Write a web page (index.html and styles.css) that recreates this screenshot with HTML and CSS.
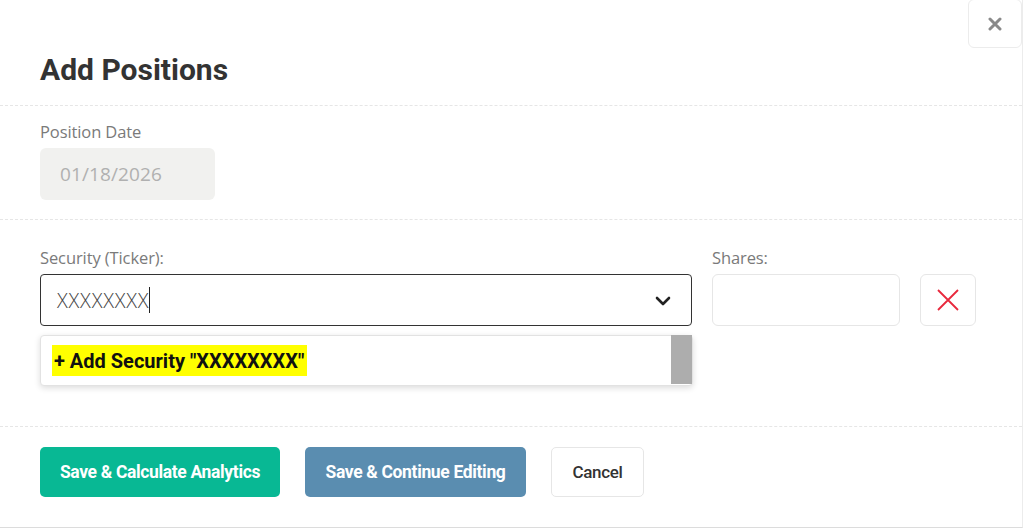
FILE: index.html
```html
<!DOCTYPE html>
<html>
<head>
<meta charset="utf-8">
<link rel="stylesheet" href="styles.css">
</head>
<body>
<div class="modal">
  <button class="close" aria-label="Close">
    <svg width="14" height="14" viewBox="0 0 14 14"><path d="M2 2L12 12M12 2L2 12" stroke="#8a8a8a" stroke-width="3" stroke-linecap="round"/></svg>
  </button>
  <div class="header">
    <h1 class="title">Add Positions</h1>
  </div>
  <div class="section date-section">
    <label class="label">Position Date</label>
    <div class="date-input">01/18/2026</div>
  </div>
  <div class="section row-section">
    <div class="row">
      <div class="field security">
        <label class="label">Security (Ticker):</label>
        <div class="select">
          <span class="value">XXXXXXXX</span><span class="caret"></span>
          <svg class="chevron" width="16" height="10" viewBox="0 0 16 10"><path d="M2 2L8 8L14 2" fill="none" stroke="#222" stroke-width="2.6" stroke-linecap="round" stroke-linejoin="round"/></svg>
        </div>
        <div class="dropdown">
          <div class="option"><span class="hl">+ Add Security "XXXXXXXX"</span></div>
          <div class="scrollbar"></div>
        </div>
      </div>
      <div class="field shares">
        <label class="label">Shares:</label>
        <div class="shares-input"></div>
      </div>
      <button class="remove" aria-label="Remove">
        <svg width="24" height="24" viewBox="0 0 24 24"><path d="M2 2L22 22M22 2L2 22" stroke="#e8283c" stroke-width="1.8"/></svg>
      </button>
    </div>
  </div>
  <div class="footer">
    <button class="btn btn-green">Save &amp; Calculate Analytics</button>
    <button class="btn btn-blue">Save &amp; Continue Editing</button>
    <button class="btn btn-cancel">Cancel</button>
  </div>
</div>
</body>
</html>
```
FILE: styles.css
```css
* { box-sizing: border-box; }
html, body { margin: 0; padding: 0; background: #fff; }
body { width: 1023px; height: 528px; overflow: hidden; font-family: "Open Sans", "Noto Sans", sans-serif; }
.modal {
  position: relative;
  width: 1023px;
  height: 528px;
  border-bottom: 1px solid #dcdcdc;
  border-right: 1px solid #ececec;
}
.close {
  position: absolute;
  top: -1px; right: 0;
  width: 54px; height: 49px;
  border: 1px solid #ececec;
  border-radius: 6px;
  background: #fff;
  display: flex; align-items: center; justify-content: center;
  padding: 0;
}
.header {
  height: 106px;
  padding: 51px 40px 0;
  border-bottom: 1px dashed #e6e6e6;
}
.title {
  margin: 0;
  font-family: Roboto, sans-serif;
  font-weight: 700;
  font-size: 30px;
  line-height: 38px;
  color: #333;
}
.section { padding: 0 40px; }
.date-section {
  height: 114px;
  padding-top: 14px;
  border-bottom: 1px dashed #e6e6e6;
}
.label {
  display: block;
  font-size: 16.5px;
  line-height: 24px;
  color: #7a7a7a;
  letter-spacing: -0.1px;
}
.date-input {
  margin-top: 4px;
  width: 175px; height: 52px;
  background: #f1f1ef;
  border-radius: 6px;
  padding-left: 20px;
  font-size: 19px;
  line-height: 52px;
  color: #b0b0b0;
  letter-spacing: 0.1px;
}
.row-section {
  height: 207px;
  padding-top: 26px;
  border-bottom: 1px dashed #e6e6e6;
}
.row { display: flex; align-items: flex-start; }
.field .label { margin-bottom: 4px; }
.security { width: 653px; position: relative; }
.select {
  position: relative;
  width: 652px; height: 52px;
  border: 1px solid #333;
  border-radius: 4px;
  display: flex; align-items: center;
  padding-left: 16px;
}
.value {
  font-size: 20px;
  color: #444;
  letter-spacing: 0.8px;
  font-weight: 300;
}
.caret {
  display: inline-block;
  width: 1px; height: 26px;
  background: #222;
  margin-left: 0;
}
.chevron { position: absolute; right: 20px; top: 21px; }
.dropdown {
  position: relative;
  margin-top: 9px;
  width: 653px; height: 51px;
  background: #fff;
  border: 1px solid #e2e2e2;
  border-radius: 4px;
  box-shadow: 0 2px 6px rgba(0,0,0,0.14);
  display: flex; align-items: center;
  padding-left: 11px;
}
.option { flex: 1; }
.hl {
  background: #ffff00;
  font-family: Roboto, sans-serif;
  font-weight: 700;
  font-size: 20px;
  line-height: 30px;
  color: #111;
  padding: 1px 3px 0 2px;
  display: inline-block;
}
.scrollbar {
  position: absolute;
  right: 0; top: -1px;
  width: 21px; height: 49px;
  background: #adadad;
}
.shares { margin-left: 19px; width: 188px; }
.shares-input {
  width: 188px; height: 52px;
  border: 1px solid #e6e6e6;
  border-radius: 6px;
}
.remove {
  margin-left: 20px;
  margin-top: 28px;
  width: 56px; height: 52px;
  border: 1px solid #e6e6e6;
  border-radius: 6px;
  background: #fff;
  display: flex; align-items: center; justify-content: center;
  padding: 0;
}
.footer {
  display: flex;
  gap: 25px;
  padding: 20px 40px 0;
}
.btn {
  height: 50px;
  border-radius: 5px;
  font-family: Roboto, sans-serif;
  font-weight: 700;
  font-size: 17.5px;
  letter-spacing: -0.35px;
  border: none;
  padding: 0;
}
.btn-green { width: 240px; background: #08b894; color: #fff; }
.btn-blue { width: 221px; background: #5a8db0; color: #fff; }
.btn-cancel { width: 93px; background: #fff; color: #333; border: 1px solid #e6e6e6; font-weight: 500; font-size: 17px; }
```
